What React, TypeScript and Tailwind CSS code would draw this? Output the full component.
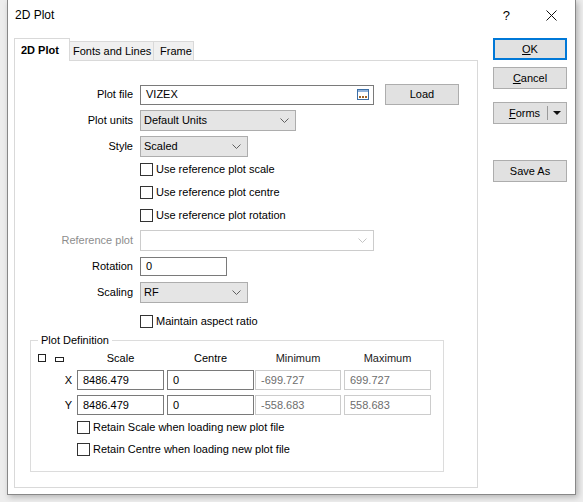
import React from 'react';

// 2D Plot dialog (Windows-style)

const Chevron: React.FC<{ disabled?: boolean }> = ({ disabled }) => (
  <svg width="9" height="5" viewBox="0 0 9 5" className="shrink-0">
    <polyline
      points="0.5,0.5 4.5,4.5 8.5,0.5"
      fill="none"
      stroke={disabled ? '#c4c4c4' : '#606060'}
      strokeWidth="1"
    />
  </svg>
);

const Combo: React.FC<{ value?: string; w: string; disabled?: boolean }> = ({ value, w, disabled }) => (
  <div
    className={`${w} h-full flex items-center justify-between pl-[3px] pr-[6px] border ${
      disabled ? 'border-[#cccccc] bg-white' : 'border-[#adadad] bg-[#e5e5e5]'
    }`}
  >
    <span>{value}</span>
    <Chevron disabled={disabled} />
  </div>
);

const TextBox: React.FC<{ value: string; w: string; disabled?: boolean; children?: React.ReactNode }> = ({
  value,
  w,
  disabled,
  children,
}) => (
  <div
    className={`${w} h-full flex items-center justify-between pl-[5px] pr-[4px] bg-white border ${
      disabled ? 'border-[#cccccc] text-[#6d6d6d]' : 'border-[#7a7a7a] text-black'
    }`}
  >
    <span>{value}</span>
    {children}
  </div>
);

const Check: React.FC<{ label: string }> = ({ label }) => (
  <div className="flex items-center">
    <span className="w-[13px] h-[13px] border border-[#333333] bg-white" />
    <span className="ml-[3px]">{label}</span>
  </div>
);

const Row: React.FC<{ label: string; cls: string; disabled?: boolean; children: React.ReactNode }> = ({
  label,
  cls,
  disabled,
  children,
}) => (
  <div className={`flex items-center ${cls}`}>
    <div className={`w-[119px] pr-[1px] text-right ${disabled ? 'text-[#8d8d8d]' : ''}`}>{label}</div>
    <div className="ml-[6px] h-full flex items-center">{children}</div>
  </div>
);

const CheckRow: React.FC<{ label: string; cls: string }> = ({ label, cls }) => (
  <div className={`flex items-center pl-[125px] ${cls}`}>
    <Check label={label} />
  </div>
);

const BrowseIcon = () => (
  <svg width="12" height="11" viewBox="0 0 12 11">
    <rect x="0.5" y="0.5" width="11" height="10" fill="#ffffff" stroke="#3c6ea5" />
    <rect x="1" y="1" width="10" height="2" fill="#8fb2dc" />
    <rect x="2" y="7" width="2" height="2" fill="#a0662a" />
    <rect x="5" y="7" width="2" height="2" fill="#a0662a" />
    <rect x="8" y="7" width="2" height="2" fill="#a0662a" />
  </svg>
);

const Btn: React.FC<{ cls?: string; children: React.ReactNode; primary?: boolean }> = ({ cls = '', children, primary }) => (
  <div
    className={`w-[74px] h-[22px] flex items-center justify-center bg-[#e1e1e1] ${
      primary ? 'border-2 border-[#0078d7]' : 'border border-[#adadad]'
    } ${cls}`}
  >
    {children}
  </div>
);

export default function App() {
  return (
    <div className="w-[583px] h-[502px] bg-[#ededed] pl-[7px] overflow-hidden font-['Liberation_Sans',Arial,sans-serif] text-[11px] text-black leading-none">
      <div className="w-[569px] h-[495px] bg-white border-x border-b border-[#888888] shadow-[2px_2px_6px_rgba(0,0,0,0.25)] flex flex-col">
        {/* title bar */}
        <div className="h-[30px] flex items-center shrink-0">
          <span className="ml-[7px] text-[12px]">2D Plot</span>
          <span className="ml-auto text-[13px]">?</span>
          <svg width="11" height="11" viewBox="0 0 11 11" className="ml-[36px] mr-[18px]">
            <path d="M0.5 0.5 L10.5 10.5 M10.5 0.5 L0.5 10.5" stroke="#111" strokeWidth="1" />
          </svg>
        </div>

        <div className="flex mt-[8px]">
          {/* left: tabs + panel */}
          <div className="ml-[6px] w-[464px] flex flex-col">
            <div className="flex items-end h-[22px]">
              <div className="relative z-10 w-[56px] h-[23px] -mb-[1px] bg-white border-x border-t border-[#d9d9d9] flex items-center pl-[6px] font-bold">
                2D Plot
              </div>
              <div className="w-[84px] h-[19px] bg-[#f0f0f0] border-t border-r border-[#d9d9d9] flex items-center pl-[3px]">
                Fonts and Lines
              </div>
              <div className="w-[40px] h-[19px] bg-[#f0f0f0] border-t border-r border-[#d9d9d9] flex items-center pl-[6px]">
                Frame
              </div>
            </div>

            <div className="h-[428px] border border-[#d9d9d9] bg-white flex flex-col">
              <Row label="Plot file" cls="mt-[23px] h-[21px]">
                <div className="h-[20px] flex">
                  <TextBox value="VIZEX" w="w-[234px]">
                    <BrowseIcon />
                  </TextBox>
                </div>
                <Btn cls="ml-[11px] !w-[74px] !h-[21px]">Load</Btn>
              </Row>
              <Row label="Plot units" cls="mt-[5px] h-[21px]">
                <Combo value="Default Units" w="w-[156px]" />
              </Row>
              <Row label="Style" cls="mt-[5px] h-[21px]">
                <Combo value="Scaled" w="w-[108px]" />
              </Row>
              <CheckRow label="Use reference plot scale" cls="mt-[1px] h-[22px]" />
              <CheckRow label="Use reference plot centre" cls="mt-[1px] h-[23px]" />
              <CheckRow label="Use reference plot rotation" cls="h-[22px]" />
              <Row label="Reference plot" cls="mt-[4px] h-[21px]" disabled>
                <Combo w="w-[234px]" disabled />
              </Row>
              <Row label="Rotation" cls="mt-[6px] h-[19px]">
                <TextBox value="0" w="w-[87px]" />
              </Row>
              <Row label="Scaling" cls="mt-[6px] h-[21px]">
                <Combo value="RF" w="w-[108px]" />
              </Row>
              <CheckRow label="Maintain aspect ratio" cls="mt-[7px] h-[22px]" />

              {/* Plot Definition group */}
              <div className="relative mt-[8px] ml-[15px] w-[414px] h-[132px] border border-[#dcdcdc] flex flex-col">
                <span className="absolute -top-[6px] left-[7px] px-[3px] bg-white">Plot Definition</span>
                <div className="mt-[9px] h-[16px] flex items-center">
                  <div className="w-[41px] h-full flex items-center">
                    <span className="ml-[7px] w-[8px] h-[8px] border border-[#222]" />
                    <span className="ml-[9px] mt-[3px] w-[9px] h-[5px] border border-[#222]" />
                  </div>
                  <div className="ml-[5px] w-[87px] text-center">Scale</div>
                  <div className="ml-[3px] w-[87px] text-center">Centre</div>
                  <div className="ml-[1px] w-[86px] text-center text-[#222]">Minimum</div>
                  <div className="ml-[3px] w-[87px] text-center text-[#222]">Maximum</div>
                </div>
                {[
                  ['X', '8486.479', '0', '-699.727', '699.727'],
                  ['Y', '8486.479', '0', '-558.683', '558.683'],
                ].map((r, i) => (
                  <div key={r[0]} className={`${i === 0 ? 'mt-[4px]' : 'mt-[5px]'} h-[20px] flex`}>
                    <div className="w-[41px] flex items-center justify-end">{r[0]}</div>
                    <div className="ml-[5px] h-full flex">
                      <TextBox value={r[1]} w="w-[87px]" />
                    </div>
                    <div className="ml-[3px] h-full flex">
                      <TextBox value={r[2]} w="w-[87px]" />
                    </div>
                    <div className="ml-[1px] h-full flex">
                      <TextBox value={r[3]} w="w-[86px]" disabled />
                    </div>
                    <div className="ml-[3px] h-full flex">
                      <TextBox value={r[4]} w="w-[87px]" disabled />
                    </div>
                  </div>
                ))}
                <div className="mt-[2px] h-[21px] flex items-center pl-[46px]">
                  <Check label="Retain Scale when loading new plot file" />
                </div>
                <div className="mt-[1px] h-[21px] flex items-center pl-[46px]">
                  <Check label="Retain Centre when loading new plot file" />
                </div>
              </div>
            </div>
          </div>

          {/* right: buttons */}
          <div className="ml-[15px] flex flex-col">
            <Btn primary>
              <span>
                <span className="underline">O</span>K
              </span>
            </Btn>
            <Btn cls="mt-[7px]">
              <span>
                <span className="underline">C</span>ancel
              </span>
            </Btn>
            <div className="mt-[13px] w-[74px] h-[22px] flex items-center bg-[#e1e1e1] border border-[#adadad]">
              <span className="flex-1 text-center pl-[8px]">
                <span className="underline">F</span>orms
              </span>
              <span className="w-px h-[14px] bg-[#9a9a9a]" />
              <svg width="8" height="4" viewBox="0 0 8 4" className="mx-[5px]">
                <polygon points="0,0 8,0 4,4" fill="#111" />
              </svg>
            </div>
            <Btn cls="mt-[36px]">Save As</Btn>
          </div>
        </div>
      </div>
    </div>
  );
}
